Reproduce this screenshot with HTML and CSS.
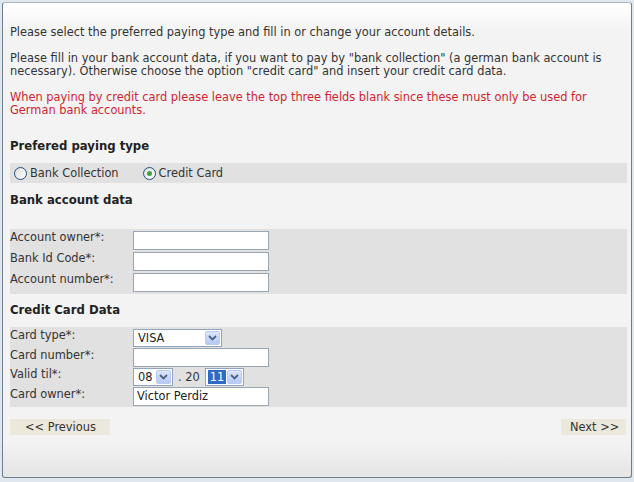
FILE: index.html
```html
<!DOCTYPE html>
<html>
<head>
<meta charset="utf-8">
<link rel="stylesheet" href="styles.css">
</head>
<body>
<div class="panel">
  <div class="content">
    <p class="intro">Please select the preferred paying type and fill in or change your account details.</p>
    <p class="intro">Please fill in your bank account data, if you want to pay by "bank collection" (a german bank account is necessary). Otherwise choose the option "credit card" and insert your credit card data.</p>
    <p class="intro warn">When paying by credit card please leave the top three fields blank since these must only be used for German bank accounts.</p>

    <h2 class="heading h-pay">Prefered paying type</h2>
    <div class="band radios">
      <label class="radio"><span class="circle"></span>Bank Collection</label>
      <label class="radio"><span class="circle checked"><span class="dot"></span></span>Credit Card</label>
    </div>

    <h2 class="heading h-bank">Bank account data</h2>
    <div class="band fields">
      <div class="row"><span class="label">Account owner*:</span><span class="input"></span></div>
      <div class="row"><span class="label">Bank Id Code*:</span><span class="input"></span></div>
      <div class="row"><span class="label">Account number*:</span><span class="input"></span></div>
    </div>

    <h2 class="heading h-card">Credit Card Data</h2>
    <div class="band fields card">
      <div class="row"><span class="label">Card type*:</span>
        <span class="select sel-type"><span class="val">VISA</span><span class="arrow"><svg width="9" height="6" viewBox="0 0 9 6"><path d="M1 1 L4.5 4.5 L8 1" fill="none" stroke="#4d6185" stroke-width="1.8"/></svg></span></span>
      </div>
      <div class="row"><span class="label">Card number*:</span><span class="input"></span></div>
      <div class="row"><span class="label">Valid til*:</span>
        <span class="select sel-month"><span class="val">08</span><span class="arrow"><svg width="9" height="6" viewBox="0 0 9 6"><path d="M1 1 L4.5 4.5 L8 1" fill="none" stroke="#4d6185" stroke-width="1.8"/></svg></span></span>
        <span class="dotsep">. 20</span>
        <span class="select sel-year"><span class="val hl">11</span><span class="arrow"><svg width="9" height="6" viewBox="0 0 9 6"><path d="M1 1 L4.5 4.5 L8 1" fill="none" stroke="#4d6185" stroke-width="1.8"/></svg></span></span>
      </div>
      <div class="row"><span class="label">Card owner*:</span><span class="input">Victor Perdiz</span></div>
    </div>

    <div class="buttons">
      <span class="btn prev">&lt;&lt; Previous</span>
      <span class="btn next">Next &gt;&gt;</span>
    </div>
  </div>
</div>
</body>
</html>
```

FILE: styles.css
```css
html, body {
  margin: 0;
  padding: 0;
}
body {
  background: #dfe7ef;
  width: 634px;
  height: 482px;
  overflow: hidden;
  font-family: "DejaVu Sans", Verdana, sans-serif;
  font-size: 11.4px;
  color: #333;
}
.panel {
  box-sizing: border-box;
  margin: 2px 2px 0 2px;
  width: 630px;
  height: 476px;
  border: 1px solid #6f7d8c;
  border-top-color: #a9b6c4;
  border-radius: 3px;
  background: linear-gradient(#ffffff 0px, #f3f3f3 28px, #f3f3f3 440px, #e6e6e6 470px);
}
.content {
  padding: 23px 4px 0 7px;
}
.intro {
  margin: 0 0 13px 0;
  line-height: 13px;
  font-size: 11.4px;
}
.warn {
  color: #d21f30;
}
.heading {
  margin: 0;
  font-size: 11.7px;
  font-weight: bold;
  line-height: 15px;
  color: #222;
}
.h-pay { margin-top: 22px; }
.h-bank { margin-top: 10px; }
.h-card { margin-top: 9px; }
.band {
  background: #e1e1e1;
  margin-top: 9px;
}
.radios {
  height: 20px;
  display: flex;
  align-items: center;
  gap: 24px;
  padding-left: 4px;
  font-size: 11.4px;
}
.radio {
  display: flex;
  align-items: center;
  gap: 3px;
}
.circle {
  box-sizing: border-box;
  width: 13px;
  height: 13px;
  border-radius: 50%;
  border: 1px solid #1c5180;
  background: linear-gradient(135deg, #dcdcd6, #ffffff);
  display: inline-flex;
  align-items: center;
  justify-content: center;
}
.dot {
  width: 5px;
  height: 5px;
  border-radius: 50%;
  background: #3fa142;
}
.fields {
  margin-top: 21px;
  padding: 1px 0 1px 0;
}
.card {
  margin-top: 9px;
}
.row {
  display: flex;
  align-items: center;
  height: 21px;
  font-size: 11.4px;
}
.card .row {
  height: 19.5px;
}
.label {
  width: 123px;
  flex: none;
  align-self: flex-start;
  line-height: 14px;
}
.input {
  box-sizing: border-box;
  width: 136px;
  height: 19px;
  background: #fff;
  border: 1px solid #9aa7b3;
  padding: 2px 3px;
  line-height: 13px;
  font-size: 11.4px;
  color: #222;
}
.select {
  box-sizing: border-box;
  height: 18px;
  background: #fff;
  border: 1px solid #8fa4bd;
  display: inline-flex;
  align-items: center;
  justify-content: space-between;
  padding: 1px;
  font-size: 11.4px;
  color: #222;
}
.select .val {
  padding-left: 3px;
  line-height: 14px;
}
.select .val.hl {
  background: #316ac5;
  color: #fff;
  padding: 0 2px;
  margin-left: 1px;
}
.arrow {
  box-sizing: border-box;
  width: 15px;
  height: 14px;
  border: 1px solid #b9cbee;
  border-radius: 2px;
  background: linear-gradient(#dbe5fb, #b6c9f5);
  display: inline-flex;
  align-items: center;
  justify-content: center;
}
.sel-type { width: 89px; }
.sel-month { width: 40px; }
.sel-year { width: 39px; }
.dotsep {
  margin: 0 5px 0 5px;
  font-size: 11.4px;
}
.buttons {
  display: flex;
  justify-content: space-between;
  margin-top: 12px;
  padding-right: 1px;
}
.btn {
  background: #ece8dc;
  height: 16px;
  line-height: 16px;
  font-size: 11.4px;
  color: #333;
}
.prev {
  width: 100px;
  box-sizing: border-box;
  padding-left: 15px;
}
.next {
  width: 65px;
  box-sizing: border-box;
  padding-left: 9px;
}
```
